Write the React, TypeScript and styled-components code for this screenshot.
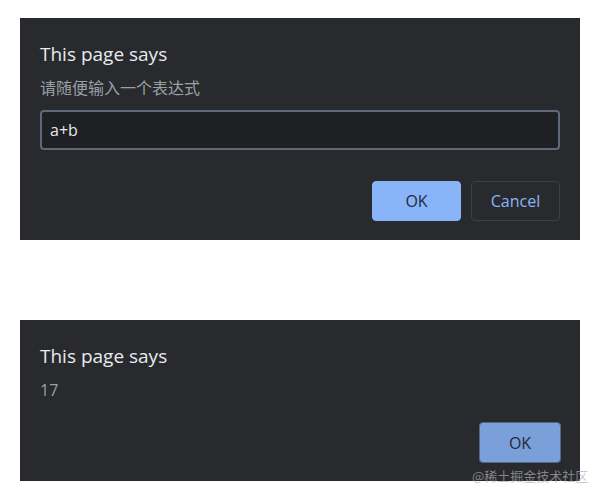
import React from "react";
import styled, { createGlobalStyle } from "styled-components";

const Global = createGlobalStyle`
  html, body { margin: 0; padding: 0; background: #ffffff; }
  body { font-family: "Open Sans", "Noto Sans", "Noto Sans CJK SC", sans-serif; }
`;

const Page = styled.div`
  position: relative;
  width: 600px;
  height: 500px;
  padding: 18px 0 0 20px;
  box-sizing: border-box;
  display: flex;
  flex-direction: column;
  gap: 80px;
`;

const Dialog = styled.div<{ $pt: number; $pb: number }>`
  width: 560px;
  box-sizing: border-box;
  background: #292a2d;
  padding: ${(p) => p.$pt}px 20px ${(p) => p.$pb}px 20px;
  display: flex;
  flex-direction: column;
`;

const Title = styled.div`
  color: #e8eaed;
  font-size: 19px;
  line-height: 24px;
  font-family: "Open Sans", "Noto Sans", sans-serif;
`;

const Message = styled.div`
  margin-top: 12px;
  color: #9aa0a6;
  font-size: 16px;
  line-height: 20px;
  font-family: "Open Sans", "Noto Sans CJK SC", sans-serif;
`;

const Input = styled.div`
  margin-top: 12px;
  height: 40px;
  box-sizing: border-box;
  border: 2px solid #5f6978;
  border-radius: 4px;
  background: #1f2023;
  color: #e8eaed;
  font-size: 16px;
  padding: 0 8px;
  display: flex;
  align-items: center;
`;

const Buttons = styled.div<{ $mt: number; $mr: number }>`
  margin-top: ${(p) => p.$mt}px;
  margin-right: ${(p) => p.$mr}px;
  display: flex;
  justify-content: flex-end;
  gap: 10px;
`;

const Button = styled.div<{ $variant: "primary" | "dim" | "secondary"; $w: number; $h: number }>`
  width: ${(p) => p.$w}px;
  height: ${(p) => p.$h}px;
  box-sizing: border-box;
  border-radius: 4px;
  display: flex;
  align-items: center;
  justify-content: center;
  font-size: 16px;
  font-family: "Open Sans", "Noto Sans", sans-serif;
  background: ${(p) =>
    p.$variant === "primary" ? "#8ab4f8" : p.$variant === "dim" ? "#7b9fd9" : "transparent"};
  color: ${(p) => (p.$variant === "secondary" ? "#8ab4f8" : "#1f2a3d")};
  border: 1px solid
    ${(p) =>
      p.$variant === "primary" ? "#8ab4f8" : p.$variant === "dim" ? "#56688a" : "#3c4043"};
`;

const Watermark = styled.div`
  position: absolute;
  left: 472px;
  top: 467px;
  font-size: 13px;
  line-height: 17px;
  color: rgba(175, 175, 178, 0.7);
  font-family: "Noto Sans CJK SC", sans-serif;
  white-space: nowrap;
`;

export default function App() {
  return (
    <>
      <Global />
      <Page>
        <Dialog $pt={24} $pb={19}>
          <Title>This page says</Title>
          <Message>请随便输入一个表达式</Message>
          <Input>a+b</Input>
          <Buttons $mt={31} $mr={0}>
            <Button $variant="primary" $w={89} $h={40}>OK</Button>
            <Button $variant="secondary" $w={89} $h={40}>Cancel</Button>
          </Buttons>
        </Dialog>
        <Dialog $pt={24} $pb={18}>
          <Title>This page says</Title>
          <Message>17</Message>
          <Buttons $mt={22} $mr={-1}>
            <Button $variant="dim" $w={82} $h={41}>OK</Button>
          </Buttons>
        </Dialog>
        <Watermark>@稀土掘金技术社区</Watermark>
      </Page>
    </>
  );
}
